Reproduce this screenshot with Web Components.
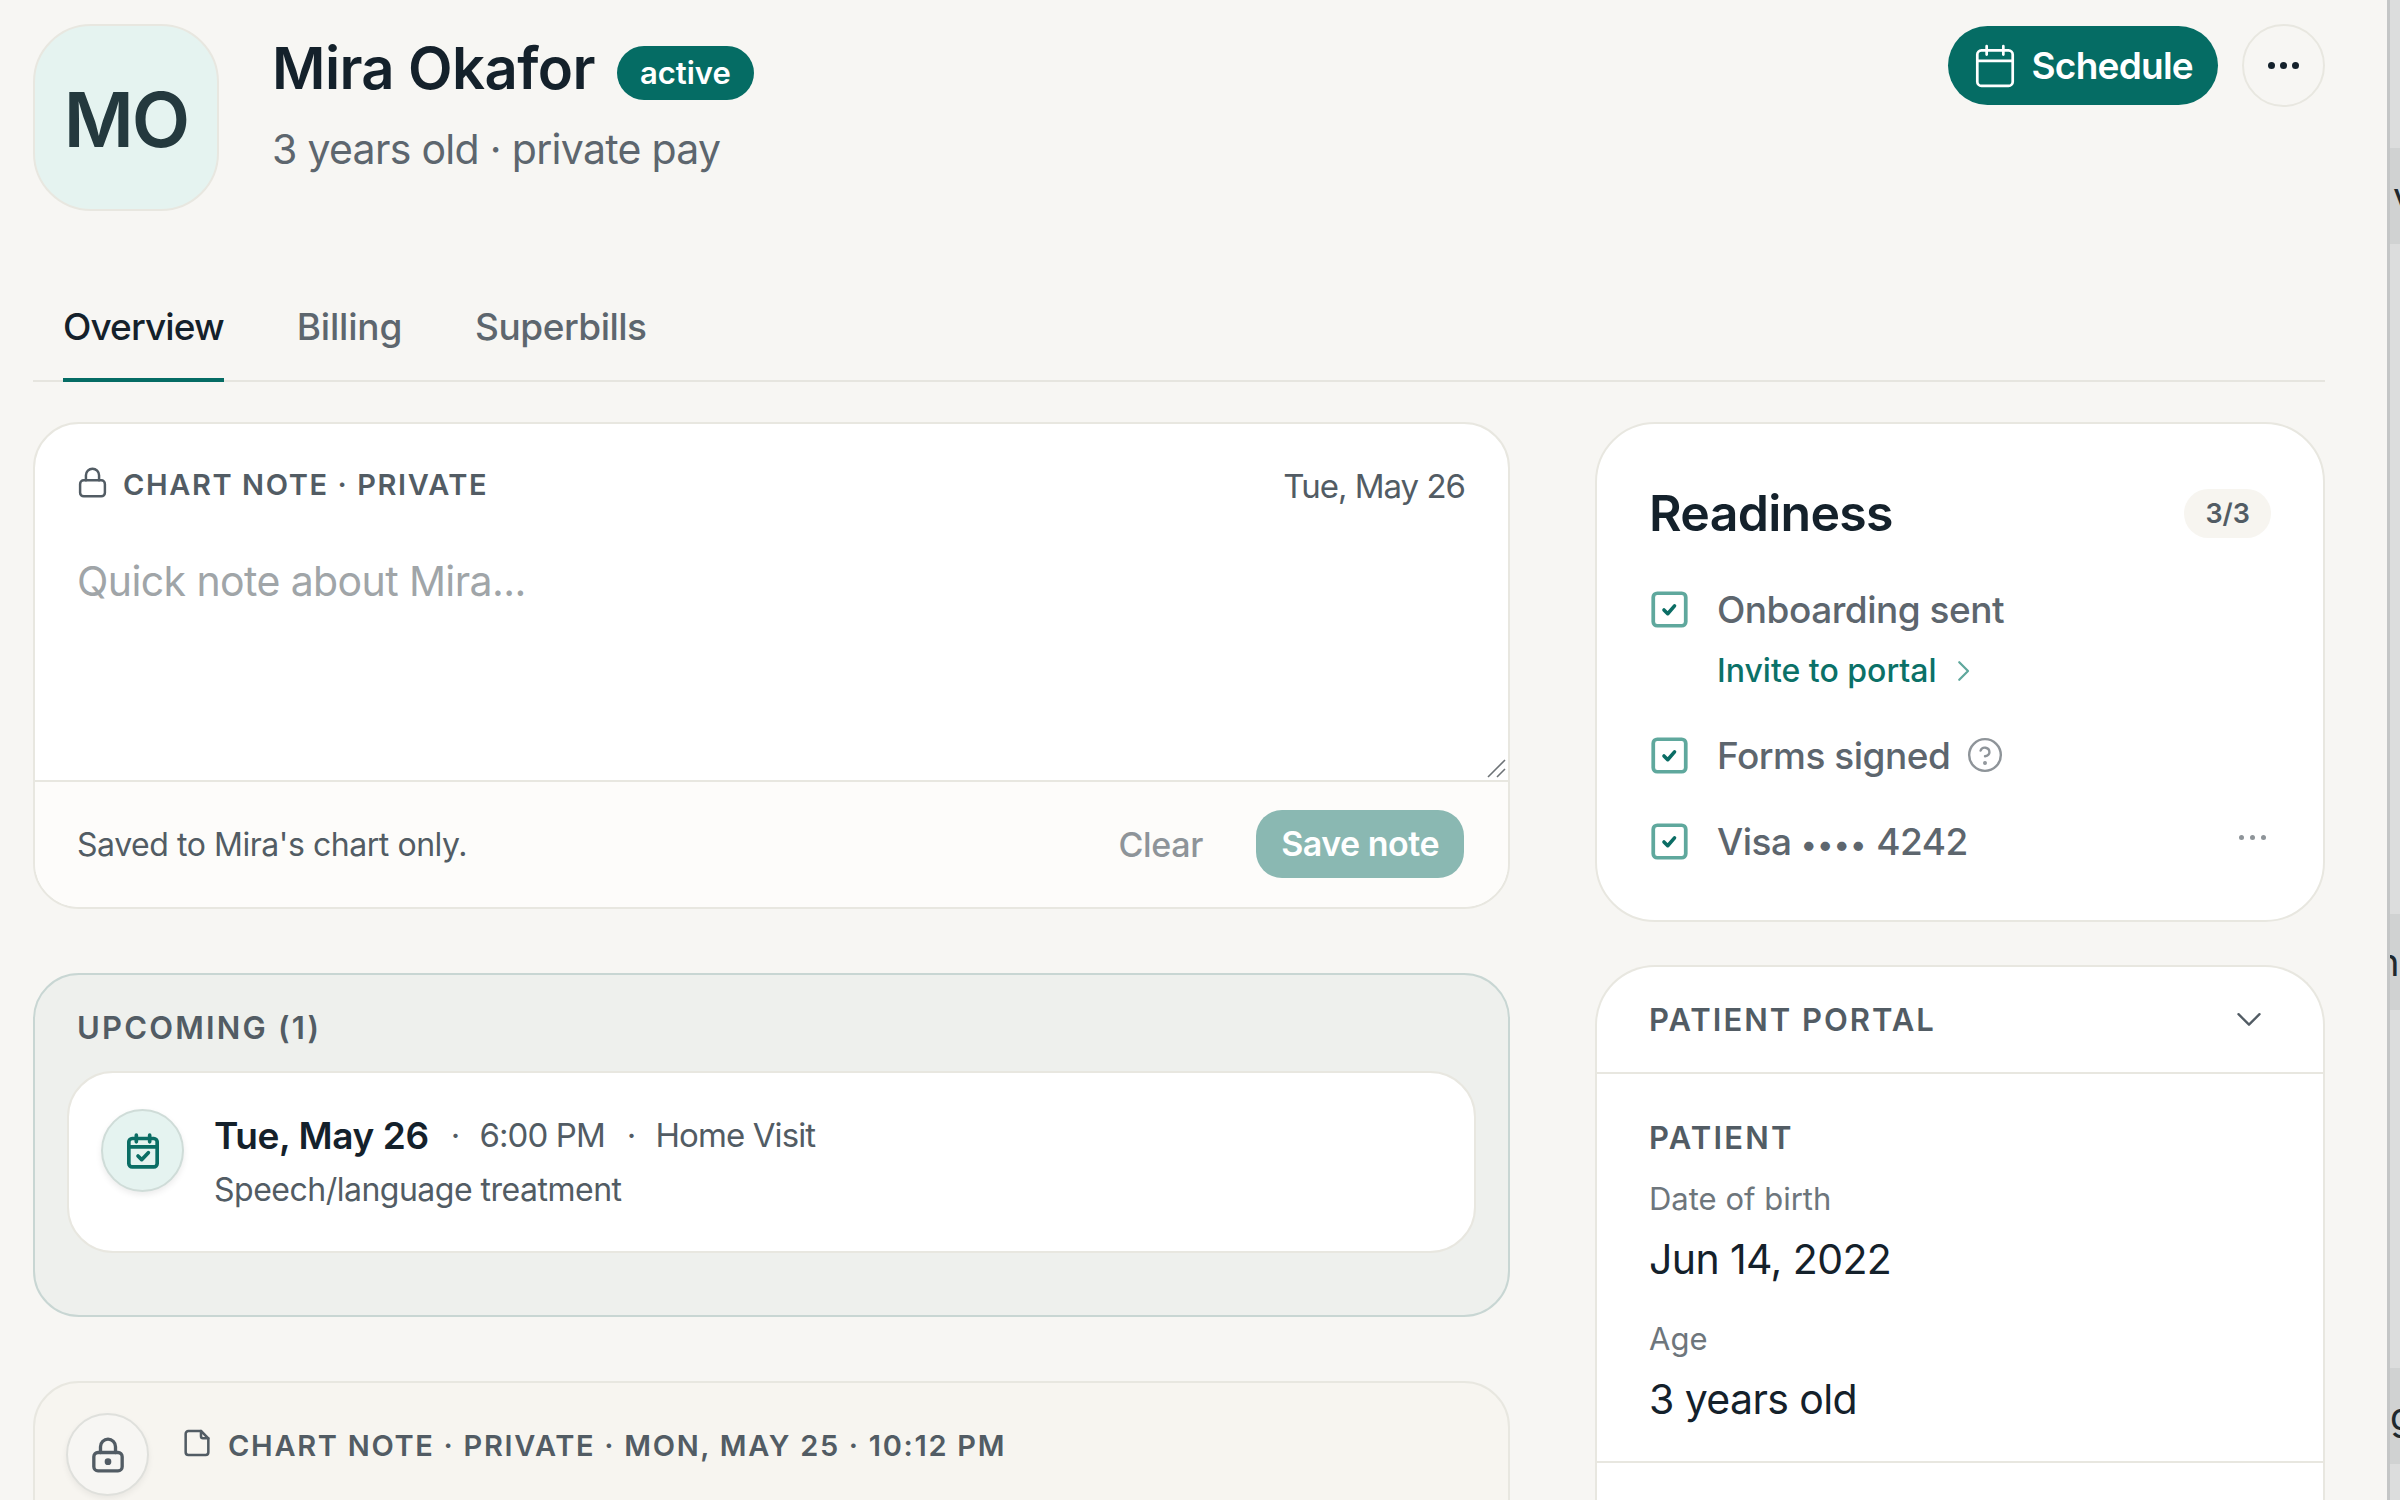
<!DOCTYPE html>
<html lang="en">
<head>
<meta charset="utf-8">
<title>Mira Okafor</title>
<style>
  html, body { margin: 0; height: 100%; overflow: hidden; background: #f7f6f3; }
  body { font-family: Inter, "Liberation Sans", sans-serif; color: #14212b; }
</style>
</head>
<body>
<patient-page></patient-page>

<script>
const ICONS = {
  calendar: `<svg viewBox="0 0 24 24" fill="none" stroke="currentColor" stroke-width="1.3" stroke-linecap="round" stroke-linejoin="round"><rect x="3.5" y="4.5" width="17" height="17" rx="2"/><path d="M3.5 9.5h17M8 2.5v4M16 2.5v4"/></svg>`,
  calcheck: `<svg viewBox="0 0 24 24" fill="none" stroke="currentColor" stroke-width="2.2" stroke-linecap="round" stroke-linejoin="round"><rect x="3.5" y="4.5" width="17" height="17" rx="2"/><path d="M3.5 9.5h17M8 2.5v4M16 2.5v4M9 15l2.2 2.2L15.2 13"/></svg>`,
  lock: `<svg viewBox="0 0 24 24" fill="none" stroke="currentColor" stroke-width="1.7" stroke-linecap="round" stroke-linejoin="round"><rect x="3.5" y="10.5" width="17" height="11" rx="2.5"/><path d="M7.5 10.5V7a4.5 4.5 0 0 1 9 0v3.5"/></svg>`,
  lockdot: `<svg viewBox="0 0 24 24" fill="none" stroke="currentColor" stroke-width="2" stroke-linecap="round" stroke-linejoin="round"><rect x="3.5" y="10.5" width="17" height="11" rx="2.5"/><path d="M7.5 10.5V7a4.5 4.5 0 0 1 9 0v3.5"/><circle cx="12" cy="16" r="1" fill="currentColor"/></svg>`,
  doc: `<svg viewBox="0 0 24 24" fill="none" stroke="currentColor" stroke-width="1.9" stroke-linecap="round" stroke-linejoin="round"><path d="M15 3H5.5a2 2 0 0 0-2 2v14a2 2 0 0 0 2 2h13a2 2 0 0 0 2-2V8.5z"/><path d="M15 3v4a1.5 1.5 0 0 0 1.5 1.5h4"/></svg>`,
  help: `<svg viewBox="0 0 24 24" fill="none" stroke="currentColor" stroke-width="1.5" stroke-linecap="round" stroke-linejoin="round"><circle cx="12" cy="12" r="10"/><path d="M9.2 9.2a2.9 2.9 0 0 1 5.6 1c0 1.9-2.8 2.6-2.8 2.6"/><circle cx="12" cy="17" r=".5" fill="currentColor"/></svg>`,
  right: `<svg viewBox="0 0 24 24" fill="none" stroke="currentColor" stroke-width="1.8" stroke-linecap="round" stroke-linejoin="round"><path d="M9 5l7 7-7 7"/></svg>`,
  down: `<svg viewBox="0 0 24 24" fill="none" stroke="currentColor" stroke-width="2" stroke-linecap="round" stroke-linejoin="round"><path d="M3 7l9 9 9-9"/></svg>`,
  tick: `<svg viewBox="0 0 24 24" fill="none" stroke-linecap="round" stroke-linejoin="round"><rect x="2" y="2" width="20" height="20" rx="2.5" stroke="#5fa89d" stroke-width="2.3"/><path d="M8.6 12.3l2.3 2.3 4.2-4.8" stroke="#0b6d65" stroke-width="2.2"/></svg>`
};

class PatientHeader extends HTMLElement {
  constructor() {
    super();
    this.attachShadow({ mode: "open" }).innerHTML = `
    <style>
      :host { display: flex; align-items: flex-start; height: 280px; padding: 24px 0 0; box-sizing: border-box; }
      .avatar { width: 186px; height: 187px; box-sizing: border-box; border: 2px solid #e8e7e0; border-radius: 58px;
        background: #e5f3f0; color: #24393e; display: flex; align-items: center; justify-content: center;
        font-size: 76px; font-weight: 600; letter-spacing: -2px; padding-top: 2px; }
      .who { margin-left: 53px; padding-top: 8px; flex: 1; }
      .name { display: flex; align-items: center; gap: 22px; height: 72px; }
      h1 { margin: 0; font-size: 58px; font-weight: 600; letter-spacing: -.6px; color: #14212b; }
      .badge { background: #056c64; color: #fff; font-size: 31px; font-weight: 600; border-radius: 28px;
        height: 54px; line-height: 54px; padding: 0 23px; margin-top: 10px; }
      .sub { margin-top: 20px; font-size: 41px; letter-spacing: -.7px; color: #5d666e; }
      .actions { display: flex; align-items: center; gap: 24px; }
      .primary { display: flex; align-items: center; gap: 12px; height: 79px; padding: 0 25px 0 22px; border-radius: 40px;
        background: #056c64; color: #fff; font-size: 37px; font-weight: 600; letter-spacing: -.75px; }
      .primary svg { width: 50px; height: 50px; }
      .more { width: 83px; height: 83px; box-sizing: border-box; border: 2px solid #e8e7e0; border-radius: 50%;
        display: flex; align-items: center; justify-content: center; gap: 5px; }
      .more i { width: 7px; height: 7px; border-radius: 50%; background: #14212b; }
    </style>
    <div class="avatar">MO</div>
    <div class="who">
      <div class="name"><h1><slot name="name"></slot></h1><span class="badge"><slot name="status"></slot></span></div>
      <div class="sub"><slot name="sub"></slot></div>
    </div>
    <div class="actions">
      <div class="primary">${ICONS.calendar}<span>Schedule</span></div>
      <div class="more"><i></i><i></i><i></i></div>
    </div>`;
  }
}

class TabBar extends HTMLElement {
  constructor() {
    super();
    this.attachShadow({ mode: "open" }).innerHTML = `
    <style>
      :host { display: flex; gap: 73px; height: 102px; padding-left: 30px; border-bottom: 2px solid #e6e5df; box-sizing: border-box; }
      div { font-size: 37px; font-weight: 500; letter-spacing: -.2px; color: #5d666e; padding-top: 24px; margin-bottom: -2px; box-sizing: border-box; }
      .on { color: #14212b; letter-spacing: -.9px; border-bottom: 4px solid #056c64; }
      .last { letter-spacing: -.5px; }
    </style>
    <div class="on">Overview</div><div>Billing</div><div class="last">Superbills</div>`;
  }
}

class NoteComposer extends HTMLElement {
  constructor() {
    super();
    this.attachShadow({ mode: "open" }).innerHTML = `
    <style>
      :host { display: block; height: 487px; box-sizing: border-box; background: #fff; border: 2px solid #e8e7e0; border-radius: 46px; overflow: hidden; }
      .top { height: 356px; box-sizing: border-box; padding: 41px 43px 0 42px; position: relative; }
      .head { display: flex; align-items: center; justify-content: space-between; height: 38px; }
      .label { display: flex; align-items: center; gap: 13px; font-size: 29px; font-weight: 600; letter-spacing: 1.6px; color: #525c64; }
      .label svg { width: 35px; height: 35px; margin: 0 0 4px -2px; }
      .date { font-size: 33px; letter-spacing: -1px; color: #525c64; padding-top: 3px; }
      .ph { margin-top: 53px; font-size: 41px; letter-spacing: -.6px; color: #a0a5a8; }
      .grip { position: absolute; right: 2px; bottom: 2px; width: 20px; height: 20px; }
      .foot { height: 129px; box-sizing: border-box; border-top: 2px solid #e8e7e0; background: #fdfcfa; padding: 0 44px 3px 42px;
        display: flex; align-items: center; font-size: 32px; letter-spacing: -.45px; color: #525c64; }
      .foot span { flex: 1; }
      .clear { color: #8e9499; font-size: 34px; font-weight: 500; letter-spacing: -.3px; margin-right: 53px; }
      .save { background: #8ab8b2; color: #fff; font-size: 34px; font-weight: 600; letter-spacing: -.5px; height: 68px; line-height: 68px; padding: 0 25px; border-radius: 26px; }
    </style>
    <div class="top">
      <div class="head"><div class="label">${ICONS.lock}<span>CHART NOTE · PRIVATE</span></div><div class="date">Tue, May 26</div></div>
      <div class="ph">Quick note about Mira...</div>
      <svg class="grip" viewBox="0 0 20 20" stroke="#6d7276" stroke-width="1.6" fill="none"><path d="M2 19L19 2M11 19l8-8"/></svg>
    </div>
    <div class="foot"><span>Saved to Mira's chart only.</span><div class="clear">Clear</div><div class="save">Save note</div></div>`;
  }
}

class UpcomingCard extends HTMLElement {
  constructor() {
    super();
    this.attachShadow({ mode: "open" }).innerHTML = `
    <style>
      :host { display: block; height: 344px; box-sizing: border-box; background: #eef0ed; border: 2px solid #c8d6d3; border-radius: 46px; padding: 0 32px; }
      .title { height: 96px; padding: 34px 0 0 10px; box-sizing: border-box; font-size: 31px; font-weight: 600; letter-spacing: 2.2px; color: #525c64; }
      .row { height: 182px; box-sizing: border-box; background: #fff; border: 2px solid #e8e7e0; border-radius: 46px; display: flex; padding: 36px 0 0 32px; }
      .ic { width: 83px; height: 83px; box-sizing: border-box; border-radius: 50%; background: #e5f3f0; border: 2px solid #cfdcd8;
        box-shadow: 0 3px 6px rgba(0,0,0,.08); color: #0b6d65; display: flex; align-items: center; justify-content: center; }
      .ic svg { width: 40px; height: 40px; }
      .txt { margin-left: 30px; margin-top: 1px; }
      .l1 { display: flex; align-items: center; height: 50px; font-size: 33px; letter-spacing: -.9px; color: #525c64; }
      .l1 b { font-size: 37px; font-weight: 600; letter-spacing: -.4px; color: #14212b; }
      .l1 i { font-style: normal; margin: 0 20px 0 22px; }
      .l2 { margin-top: 10px; font-size: 32px; letter-spacing: -.5px; color: #525c64; }
    </style>
    <div class="title">UPCOMING (1)</div>
    <div class="row">
      <div class="ic">${ICONS.calcheck}</div>
      <div class="txt">
        <div class="l1"><b>Tue, May 26</b><i>·</i>6:00 PM<i>·</i>Home Visit</div>
        <div class="l2">Speech/language treatment</div>
      </div>
    </div>`;
  }
}

class HistoryCard extends HTMLElement {
  constructor() {
    super();
    this.attachShadow({ mode: "open" }).innerHTML = `
    <style>
      :host { display: flex; height: 200px; box-sizing: border-box; background: #f7f5f0; border: 2px solid #e8e7e0; border-radius: 46px 46px 0 0; padding: 30px 0 0 31px; }
      .ic { width: 83px; height: 83px; box-sizing: border-box; border-radius: 50%; background: #f7f6f3; border: 2px solid #dfe0dc; box-shadow: 0 3px 6px rgba(0,0,0,.06); color: #525c64; display: flex; align-items: center; justify-content: center; }
      .ic svg { width: 40px; height: 40px; }
      .label { display: flex; align-items: center; gap: 15px; height: 40px; margin: 12px 0 0 32px; font-size: 29px; font-weight: 600; letter-spacing: 1.7px; color: #525c64; white-space: nowrap; }
      .label svg { width: 32px; height: 32px; margin-bottom: 4px; }
    </style>
    <div class="ic">${ICONS.lockdot}</div>
    <div class="label">${ICONS.doc}<span>CHART NOTE · PRIVATE · MON, MAY 25 · 10:12 PM</span></div>`;
  }
}

class ReadinessCard extends HTMLElement {
  constructor() {
    super();
    this.attachShadow({ mode: "open" }).innerHTML = `
    <style>
      :host { display: block; height: 500px; box-sizing: border-box; background: #fff; border: 2px solid #e8e7e0; border-radius: 60px; padding: 0 52px; }
      .head { display: flex; align-items: center; justify-content: space-between; height: 155px; padding-top: 23px; box-sizing: border-box; }
      h2 { margin: 0; font-size: 50px; font-weight: 600; letter-spacing: -.7px; color: #14212b; }
      .pill { background: #f7f5f0; border-radius: 25px; height: 49px; line-height: 49px; padding: 0 21px; font-size: 27px; font-weight: 600; color: #525c64; }
      .row { display: flex; align-items: center; gap: 28px; height: 60px; margin-left: 1px; font-size: 37px; font-weight: 500; letter-spacing: -.5px; color: #5d666e; }
      .row svg.box { width: 39px; height: 39px; flex: none; }
      .row svg.q { width: 38px; height: 38px; color: #8e9499; margin-left: -12px; }
      .row .sp { flex: 1; }
      .row .mask { font-size: 30px; letter-spacing: .5px; }
      .link { display: flex; align-items: center; gap: 11px; margin: 1px 0 0 68px; height: 61px; font-size: 32px; font-weight: 500; color: #0b7168; }
      .link svg { width: 30px; height: 30px; color: #5fa89d; }
      .dots { display: flex; gap: 6px; margin: -8px 5px 0 0; }
      .dots i { width: 5px; height: 5px; border-radius: 50%; background: #8e9499; }
    </style>
    <div class="head"><h2>Readiness</h2><div class="pill">3/3</div></div>
    <div class="row">${ICONS.tick.replace("<svg", '<svg class="box"')}Onboarding sent</div>
    <div class="link">Invite to portal${ICONS.right}</div>
    <div class="row" style="margin-top:24px">${ICONS.tick.replace("<svg", '<svg class="box"')}Forms signed${ICONS.help.replace("<svg", '<svg class="q"')}</div>
    <div class="row" style="margin-top:26px">${ICONS.tick.replace("<svg", '<svg class="box"')}<span>Visa <span class="mask">••••</span> 4242</span><span class="sp"></span><span class="dots"><i></i><i></i><i></i></span></div>`;
  }
}

class PortalCard extends HTMLElement {
  constructor() {
    super();
    this.attachShadow({ mode: "open" }).innerHTML = `
    <style>
      :host { display: block; height: 560px; box-sizing: border-box; background: #fff; border: 2px solid #e8e7e0; border-bottom: 0; border-radius: 60px 60px 0 0; }
      .head { display: flex; align-items: center; justify-content: space-between; height: 107px; padding: 0 60px 0 52px; box-sizing: border-box; border-bottom: 2px solid #e8e7e0; font-size: 31px; font-weight: 600; letter-spacing: 2px; color: #525c64; }
      .head svg { width: 28px; height: 28px; color: #525c64; }
      .body { height: 389px; box-sizing: border-box; padding: 44px 52px 0; border-bottom: 2px solid #e8e7e0; }
      .cap { font-size: 31px; font-weight: 600; letter-spacing: 2.2px; color: #525c64; line-height: 40px; }
      .k { font-size: 31px; color: #6e767c; line-height: 40px; margin-top: 21px; }
      .v { font-size: 41px; letter-spacing: -.6px; color: #14212b; line-height: 52px; margin-top: 14px; }
      .k.age { margin-top: 34px; }
    </style>
    <div class="head"><span>PATIENT PORTAL</span>${ICONS.down}</div>
    <div class="body">
      <div class="cap">PATIENT</div>
      <div class="k">Date of birth</div><div class="v">Jun 14, 2022</div>
      <div class="k age">Age</div><div class="v">3 years old</div>
    </div>`;
  }
}

// the next window peeks in at the right edge of the screenshot
class PeekStrip extends HTMLElement {
  constructor() {
    super();
    this.attachShadow({ mode: "open" }).innerHTML = `
    <style>
      :host { position: absolute; top: 0; right: 0; bottom: 0; width: 13px; background: #dcdddd; border-left: 3px solid #c4c6c6; overflow: hidden; box-sizing: border-box; }
      div { position: absolute; left: 0; right: 0; height: 96px; background: #d0d2d2; font-size: 38px; line-height: 96px; color: #20292e; white-space: nowrap; }
    </style>
    <div style="top:148px;text-indent:3px">v</div><div style="top:914px;text-indent:-13px">n</div><div style="top:1368px;text-indent:0">g</div>`;
  }
}

class PatientPage extends HTMLElement {
  constructor() {
    super();
    this.attachShadow({ mode: "open" }).innerHTML = `
    <style>
      :host { display: block; position: relative; height: 1500px; overflow: hidden; box-sizing: border-box; padding: 0 75px 0 33px; }
      .cols { display: grid; grid-template-columns: 1477px 730px; column-gap: 85px; margin-top: 40px; }
      .col { display: flex; flex-direction: column; }
      note-composer { margin-bottom: 64px; }
      upcoming-card { margin-bottom: 64px; }
      readiness-card { margin-bottom: 43px; }
    </style>
    <patient-header>
      <span slot="name">Mira Okafor</span>
      <span slot="status">active</span>
      <span slot="sub">3 years old · private pay</span>
    </patient-header>
    <tab-bar></tab-bar>
    <div class="cols">
      <div class="col"><note-composer></note-composer><upcoming-card></upcoming-card><history-card></history-card></div>
      <div class="col"><readiness-card></readiness-card><portal-card></portal-card></div>
    </div>
    <peek-strip></peek-strip>`;
  }
}

customElements.define("patient-header", PatientHeader);
customElements.define("tab-bar", TabBar);
customElements.define("note-composer", NoteComposer);
customElements.define("upcoming-card", UpcomingCard);
customElements.define("history-card", HistoryCard);
customElements.define("readiness-card", ReadinessCard);
customElements.define("portal-card", PortalCard);
customElements.define("peek-strip", PeekStrip);
customElements.define("patient-page", PatientPage);
</script>
</body>
</html>
